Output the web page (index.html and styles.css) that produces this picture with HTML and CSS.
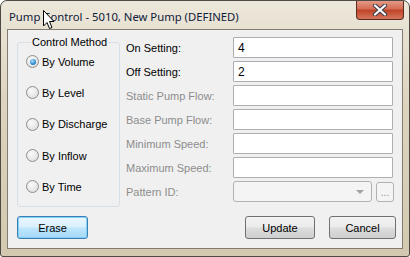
FILE: index.html
```html
<!DOCTYPE html>
<html lang="en">
<head>
    <meta charset="UTF-8">
    <link rel="stylesheet" href="styles.css">
</head>
<body>
    <div class="win">
        <div class="title">
            <span class="caption">Pump Control - 5010, New Pump (DEFINED)</span>
            <div class="close">
                <svg width="16" height="12" viewBox="0 0 16 12">
                    <path d="M3 1.5 L13 10.5 M13 1.5 L3 10.5" stroke="#3d3d4a" stroke-width="4.2" stroke-linecap="round"/>
                    <path d="M3 1.5 L13 10.5 M13 1.5 L3 10.5" stroke="#ffffff" stroke-width="2.2" stroke-linecap="round"/>
                </svg>
            </div>
            <svg class="cursor" width="13" height="20" viewBox="0 0 13 20">
                <path d="M0.5 0.5 L0.5 16 L4 12.5 L6.5 18.5 L9 17.5 L6.5 11.5 L11 11.5 Z" fill="#fff" stroke="#000" stroke-width="1"/>
            </svg>
        </div>
        <div class="client">
            <div class="top">
                <fieldset class="group">
                    <legend>Control Method</legend>
                    <label class="radio"><span class="dot on"></span>By Volume</label>
                    <label class="radio"><span class="dot"></span>By Level</label>
                    <label class="radio"><span class="dot"></span>By Discharge</label>
                    <label class="radio"><span class="dot"></span>By Inflow</label>
                    <label class="radio"><span class="dot"></span>By Time</label>
                </fieldset>
                <div class="form">
                    <div class="row"><span class="lbl">On Setting:</span><div class="edit">4</div></div>
                    <div class="row"><span class="lbl">Off Setting:</span><div class="edit">2</div></div>
                    <div class="row"><span class="lbl dis">Static Pump Flow:</span><div class="edit off"></div></div>
                    <div class="row"><span class="lbl dis">Base Pump Flow:</span><div class="edit off"></div></div>
                    <div class="row"><span class="lbl dis">Minimum Speed:</span><div class="edit off"></div></div>
                    <div class="row"><span class="lbl dis">Maximum Speed:</span><div class="edit off"></div></div>
                    <div class="row">
                        <span class="lbl dis">Pattern ID:</span>
                        <div class="combo"><span class="arrow"></span></div>
                        <div class="dots">...</div>
                    </div>
                </div>
            </div>
            <div class="bottom">
                <div class="btn def">Erase</div>
                <div class="spacer"></div>
                <div class="btn">Update</div>
                <div class="btn cancel">Cancel</div>
            </div>
        </div>
    </div>
</body>
</html>
```

FILE: styles.css
```css
body{
    margin: 0;
    background: #fff;
    font-family: "Liberation Sans", Arial, sans-serif;
    font-size: 11px;
}
.win{
    width: 410px;
    height: 257px;
    box-sizing: border-box;
    border: 1px solid #4d4a44;
    border-radius: 7px 7px 3px 3px;
    background: linear-gradient(180deg, #ece7da 0%, #ddd4bf 40%, #d3c9b0 100%);
    display: flex;
    flex-direction: column;
    padding: 0 6px 7px 6px;
    overflow: hidden;
}
.title{
    height: 28px;
    position: relative;
    display: flex;
    align-items: center;
}
.caption{
    font-family: "Noto Sans", sans-serif;
    font-size: 11.3px;
    color: #10203a;
    padding-left: 2px;
    padding-top: 2px;
}
.close{
    position: absolute;
    right: -1px;
    top: -1px;
    width: 46px;
    height: 19px;
    border: 1px solid #5c2a22;
    border-top: none;
    border-radius: 0 0 4px 4px;
    background: linear-gradient(180deg, #e5a08e 0%, #d66e55 45%, #c0452a 55%, #d4765a 100%);
    display: flex;
    align-items: center;
    justify-content: center;
}
.cursor{
    position: absolute;
    left: 36px;
    top: 9px;
}
.client{
    flex: 1;
    background: #f0f0f0;
    border: 1px solid #827d70;
    display: flex;
    flex-direction: column;
    padding: 6px 6px 9px 9px;
}
.top{
    display: flex;
    height: 170px;
}
.group{
    margin: 0;
    width: 103px;
    box-sizing: border-box;
    height: 171px;
    border: 1px solid #d5dfe5;
    border-radius: 3px;
    padding: 6px 0 0 8px;
    display: flex;
    flex-direction: column;
}
.group legend{
    padding: 0 1px;
    margin-left: 5px;
    color: #000;
}
.radio{
    display: flex;
    align-items: center;
    height: 31.3px;
    gap: 3px;
    color: #000;
}
.radio:first-of-type{
    margin-top: -8px;
}
.dot{
    width: 11px;
    height: 11px;
    border-radius: 50%;
    border: 1px solid #8f8f8f;
    background: radial-gradient(circle at 40% 35%, #fbfbfb 0%, #e6e6e6 60%, #d2d2d2 100%);
    display: flex;
    align-items: center;
    justify-content: center;
}
.dot.on::after{
    content: "";
    width: 6px;
    height: 6px;
    border-radius: 50%;
    background: radial-gradient(circle at 40% 35%, #b9e2fb 0%, #2f8fd3 55%, #1a5d9a 100%);
}
.form{
    margin-left: 6px;
    display: flex;
    flex-direction: column;
    gap: 2.5px;
    margin-top: 1px;
}
.row{
    display: flex;
    align-items: center;
    height: 21.5px;
}
.lbl{
    width: 107px;
    color: #000;
}
.lbl.dis{
    color: #8d8d8d;
}
.edit{
    width: 160px;
    height: 21px;
    box-sizing: border-box;
    border: 1px solid #abadb3;
    background: #fff;
    padding: 3px 0 0 4px;
    font-size: 12px;
    border-radius: 1px;
}
.edit.off{
    border-color: #afafaf;
}
.combo{
    width: 139px;
    height: 21px;
    box-sizing: border-box;
    border: 1px solid #b1b1b1;
    border-radius: 3px;
    background: #f4f4f4;
    display: flex;
    justify-content: flex-end;
    align-items: center;
    padding-right: 7px;
}
.arrow{
    width: 0;
    height: 0;
    border-left: 4px solid transparent;
    border-right: 4px solid transparent;
    border-top: 4px solid #a0a0a0;
}
.dots{
    width: 18px;
    height: 20px;
    box-sizing: border-box;
    margin-left: 4px;
    border: 1px solid #b1b1b1;
    border-radius: 3px;
    background: #f4f4f4;
    color: #8d8d8d;
    font-size: 10px;
    text-align: center;
    line-height: 20px;
}
.bottom{
    display: flex;
    margin-top: auto;
    gap: 14px;
}
.spacer{
    flex: 1;
}
.btn{
    width: 70px;
    height: 23px;
    box-sizing: border-box;
    border: 1px solid #707070;
    border-radius: 3px;
    background: linear-gradient(180deg, #f2f2f2 0%, #ebebeb 48%, #dddddd 52%, #cfcfcf 100%);
    display: flex;
    align-items: center;
    justify-content: center;
    color: #000;
}
.btn.def{
    width: 71px;
    border-color: #3c7fb1;
    background: linear-gradient(180deg, #eaf6fd 0%, #d9f0fc 48%, #bee6fd 52%, #a7d9f5 100%);
    box-shadow: inset 0 0 0 1px #7fd0ff;
}
.btn.cancel{
    width: 67px;
}
```
